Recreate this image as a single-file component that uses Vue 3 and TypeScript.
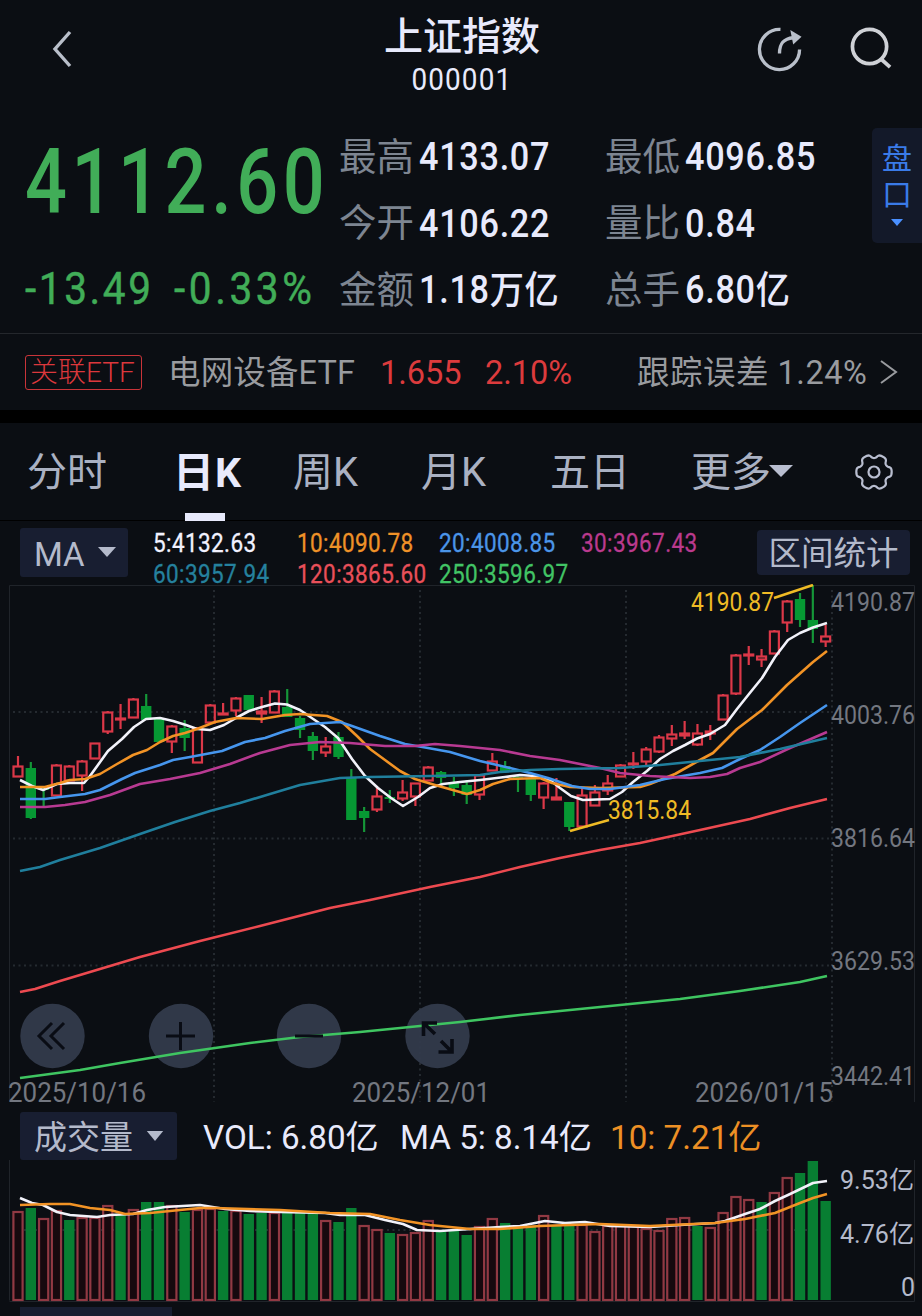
<script setup lang="ts">
type Candle = [kind: 'r' | 'g', top: number, bottom: number, high: number, low: number]

interface Stat {
  label: string
  value: string
}

const stats: Stat[] = [
  { label: '最高', value: '4133.07' },
  { label: '最低', value: '4096.85' },
  { label: '今开', value: '4106.22' },
  { label: '量比', value: '0.84' },
  { label: '金额', value: '1.18万亿' },
  { label: '总手', value: '6.80亿' },
]

const tabs = ['分时', '日K', '周K', '月K', '五日']

const averages = [
  { text: '5:4132.63', tone: 'white' },
  { text: '10:4090.78', tone: 'orange' },
  { text: '20:4008.85', tone: 'blue' },
  { text: '30:3967.43', tone: 'magenta' },
  { text: '60:3957.94', tone: 'teal' },
  { text: '120:3865.60', tone: 'red' },
  { text: '250:3596.97', tone: 'green' },
]

const step = 12.82
const cx = (i: number): number => 18 + step * i

// Six-lobed outline of the settings gear
const gearPoints = Array.from({ length: 120 }, (_, i) => {
  const a = (i / 120) * Math.PI * 2
  const r = 15.6 + 2.1 * Math.tanh(1.8 * Math.cos(6 * a) + 0.7)
  return `${(19 + r * Math.cos(a)).toFixed(2)},${(18 + r * Math.sin(a)).toFixed(2)}`
}).join(' ')

const candles: Candle[] = [
  ['r', 766, 777, 756, 777], ['g', 768, 818, 762, 819], ['g', 788, 790, 787, 808], ['r', 765, 796, 764, 796],
  ['r', 766, 781, 765, 781], ['r', 761, 776, 760, 791], ['r', 743, 759, 743, 759], ['r', 712, 732, 711, 734],
  ['r', 718, 720, 704, 729], ['r', 699, 718, 698, 718], ['g', 706, 720, 694, 720], ['g', 719, 742, 719, 742],
  ['r', 726, 742, 725, 753], ['g', 728, 738, 720, 751], ['r', 728, 763, 727, 763], ['r', 705, 723, 704, 723],
  ['r', 713, 715, 703, 715], ['r', 698, 711, 697, 716], ['g', 695, 710, 695, 711], ['r', 711, 714, 697, 723],
  ['r', 691, 713, 690, 713], ['g', 707, 717, 689, 717], ['g', 718, 730, 716, 738], ['g', 736, 751, 732, 760],
  ['r', 746, 753, 737, 757], ['g', 737, 757, 732, 759], ['g', 778, 820, 769, 820], ['g', 811, 818, 807, 832],
  ['r', 796, 810, 787, 812], ['g', 797, 799, 790, 803], ['r', 792, 799, 780, 801], ['r', 783, 797, 783, 806],
  ['r', 767, 781, 766, 781], ['g', 772, 778, 771, 784], ['g', 782, 788, 777, 796], ['g', 785, 795, 780, 804],
  ['r', 775, 795, 775, 800], ['r', 761, 771, 753, 771], ['g', 766, 772, 761, 773], ['g', 777, 779, 775, 792],
  ['g', 779, 795, 779, 801], ['r', 783, 798, 782, 809], ['r', 797, 800, 778, 800], ['g', 802, 827, 802, 831],
  ['r', 795, 827, 787, 827], ['r', 792, 806, 785, 806], ['r', 783, 791, 775, 795], ['r', 765, 777, 764, 777],
  ['r', 763, 765, 752, 769], ['r', 749, 762, 747, 765], ['r', 737, 752, 735, 753], ['r', 734, 739, 725, 746],
  ['r', 733, 736, 721, 739], ['r', 733, 745, 724, 746], ['r', 731, 734, 725, 740], ['r', 695, 720, 694, 720],
  ['r', 655, 694, 654, 695], ['r', 654, 656, 646, 665], ['r', 656, 660, 649, 667], ['r', 631, 654, 630, 654],
  ['r', 601, 623, 600, 632], ['g', 599, 620, 593, 627], ['g', 620, 629, 585, 643], ['r', 636, 642, 625, 647],
]

const volumeKinds = 'rgrrgrrrgrggrgrrgrggrgggrggrrgrrrggg' + 'rrgggrggrrrrrrrrrgrrrrgrrggg'
const volumeTops = [
  1211, 1208, 1218, 1210, 1220, 1217, 1217, 1205, 1214, 1209, 1202, 1202, 1205, 1212, 1209, 1208,
  1211, 1210, 1214, 1213, 1212, 1212, 1212, 1213, 1220, 1222, 1208, 1225, 1229, 1233, 1234, 1232,
  1220, 1232, 1231, 1235, 1226, 1218, 1223, 1226, 1226, 1215, 1226, 1225, 1224, 1231, 1225, 1225,
  1225, 1228, 1230, 1218, 1217, 1226, 1227, 1212, 1196, 1199, 1202, 1192, 1177, 1173, 1161, 1201,
]
const volumes = volumeTops.map((top, i) => ({ x: cx(i), top, red: volumeKinds[i] === 'r' }))

const priceLines = [
  { tone: 'green', points: '20,1078 50,1074 80,1070 120,1063 180,1053 250,1043 300,1037 360,1032 410,1027 460,1022 520,1015 600,1007 680,999 740,991 800,982 827,976' },
  { tone: 'red', points: '20,992 35,989 60,981 100,969 140,957 200,941 260,926 330,908 370,900 430,887 480,877 520,867 560,858 600,850 640,843 700,830 750,819 790,808 827,799' },
  { tone: 'white', points: '20,780 32,786 43,790 57,784 70,783 84,783 90,776 108,751 122,739 134,727 146,719 160,718 173,721 186,725 197,729 210,730 224,725 236,718 249,711 262,707 275,703.5 287,704.5 300,710 325,727 338,738 352,759 365,776 378,788 391,798 403,806 418,797 430,788 443,784 460,782 480,780 505,777 520,775 535,776 550,780 560,788 571,796 583,800 610,799 622,792 633,782 647,771 660,759 673,751 685,745 697,738.5 710,734 725,725 737,709 749,694 762,678 775,657 788,640 800,633 813,627.5 827,623' },
  { tone: 'orange', points: '20,787 45,787 60,783 70,780 85,779 100,774 117,764 133,755 147,750 160,742 173,736 185,733 197,729 215,722 236,718 262,719 285,715 300,714 327,716 342,722 357,736 370,749 385,760 400,771 415,779 435,785 467,794 480,790 493,784 510,779 540,778 552,783 570,787 600,788 640,787 650,784 675,774 700,760 713,753 737,729 762,710 787,685 813,662 827,651' },
  { tone: 'blue', points: '20,799 45,799 60,797 85,794 100,790 122,779 135,773 160,765 173,760 190,757 222,751 245,742 265,738 285,731 310,724 340,722 352,726 380,736 405,744 428,748 450,752 480,761 510,768 530,773 548,778 572,786 590,789 610,789 640,785 665,779 700,773 722,768 740,759 760,750 780,737 800,723 827,705' },
  { tone: 'magenta', points: '20,807 45,807 65,805 85,802 110,795 140,784 170,779 200,773 230,764 260,753 290,745 320,742 350,743 385,746 415,746 435,744 460,746 500,750 530,756 560,760 600,768 620,773 650,776 690,778 710,777 727,774 740,768 760,762 790,748 827,732' },
  { tone: 'teal', points: '20,871 40,867 60,860 100,848 140,834 175,822 210,811 240,803 270,794 300,785 340,778 370,777 430,776 480,775 500,772 530,770 560,769 620,768 660,765 700,761 740,757 780,749 827,738' },
]

const volumeLines = [
  { tone: 'white', points: '20,1198 32,1203 43,1205 57,1212 70,1215 97,1217 110,1215 133,1214 147,1210 165,1207 200,1205 225,1209 250,1211 280,1212 325,1213 340,1215 365,1215 385,1220 403,1224 417,1230 440,1231 470,1229 500,1227 520,1226 545,1221 565,1223 585,1222 610,1226 650,1227 680,1225 715,1223 725,1221 745,1214 760,1209 775,1201 788,1195 813,1183 827,1181' },
  { tone: 'orange', points: '20,1205 50,1204 70,1204 90,1208 110,1210 125,1214 150,1213 180,1210 200,1208 215,1208 280,1210 330,1213 370,1214 400,1220 430,1225 470,1229 500,1229 540,1226 600,1224 650,1226 715,1223 745,1219 775,1213 800,1203 813,1198 827,1194' },
]

const priceAxis = [
  { text: '4190.87', y: 611 },
  { text: '4003.76', y: 723.5 },
  { text: '3816.64', y: 847 },
  { text: '3629.53', y: 969.5 },
  { text: '3442.41', y: 1085 },
]

const dates = [
  { text: '2025/10/16', x: 8 },
  { text: '2025/12/01', x: 352 },
  { text: '2026/01/15', x: 695 },
]
</script>

<template>
  <main class="screen">
    <header class="top">
      <svg class="back" viewBox="0 0 24 40"><path d="M20 3 5 20l15 17" /></svg>
      <div class="title">
        <h1>上证指数</h1>
        <span>000001</span>
      </div>
      <svg class="share" viewBox="0 0 48 48">
        <path d="M25 3.500A20.500 20.500 0 1 0 44.500 24" />
        <path d="M24 28c0-10 4-15 14-16" />
        <path class="solid" d="M35 4 46.500 11 38 19z" />
      </svg>
      <svg class="search" viewBox="0 0 44 44"><circle cx="20" cy="20" r="17.500" /><path d="m32 33 9 8" /></svg>
    </header>

    <section class="quote">
      <div class="last">
        <strong>4112.60</strong>
        <div class="delta"><span>-13.49</span><span class="pct">-0.33%</span></div>
      </div>
      <dl class="stats">
        <div v-for="s in stats" :key="s.label"><dt>{{ s.label }}</dt><dd>{{ s.value }}</dd></div>
      </dl>
      <aside class="depth">
        <span>盘</span><span>口</span>
        <svg viewBox="0 0 12 8"><path d="M0 0h12L6 7z" /></svg>
      </aside>
    </section>

    <section class="etf">
      <span class="tag">关联ETF</span>
      <span class="name">电网设备ETF</span>
      <span class="up price">1.655</span>
      <span class="up rate">2.10%</span>
      <span class="track">跟踪误差 1.24%</span>
      <svg viewBox="0 0 20 28"><path d="m2 3 15 11L2 25" /></svg>
    </section>

    <nav class="tabs">
      <span v-for="t in tabs" :key="t" :class="{ active: t === '日K' }">{{ t }}</span>
      <span class="more">更多<svg viewBox="0 0 24 12"><path d="M0 0h24L12 12z" /></svg></span>
      <svg class="gear" viewBox="0 0 38 36">
        <polygon :points="gearPoints" />
        <circle cx="19" cy="18" r="5.500" />
      </svg>
    </nav>

    <section class="legend">
      <div class="picker">MA<svg viewBox="0 0 18 10"><path d="M0 0h18L9 10z" /></svg></div>
      <div class="ma-grid">
        <span v-for="a in averages" :key="a.text" :class="a.tone">{{ a.text }}</span>
      </div>
      <div class="range">区间统计</div>
    </section>

    <svg class="chart" viewBox="0 584 922 524">
      <path class="frame" d="M9.500 1102V585.500H914.500V1102" />
      <path class="grid" d="M13 712H832M13 838.500H832M13 965.500H832M214 590V1102M420 590V1102M626 590V1102M832 590V1102" />
      <g v-for="(c, i) in candles" :key="i" :class="c[0] === 'r' ? 'rise' : 'fall'">
        <template v-if="c[0] === 'r'">
          <path :d="`M${cx(i)} ${c[3]}V${c[1]}M${cx(i)} ${c[2]}V${c[4]}`" />
          <rect :x="cx(i) - 4.5" :y="c[1] + 0.5" width="9" :height="Math.max(1, c[2] - c[1] - 1)" />
        </template>
        <template v-else>
          <path :d="`M${cx(i)} ${c[3]}V${c[4]}`" />
          <rect :x="cx(i) - 5.2" :y="c[1]" width="10.4" :height="c[2] - c[1]" />
        </template>
      </g>
      <g class="rounds">
        <circle v-for="x in [52.5, 181, 309, 437.5]" :key="x" :cx="x" cy="1036" r="32.200" />
      </g>
      <polyline v-for="l in priceLines" :key="l.tone" class="line" :class="l.tone" :points="l.points" />
      <path class="glyph" d="m52 1023-13 13 13 13M64 1023l-13 13 13 13M166 1036h29M180.500 1022v28M295 1036h28" />
      <path class="glyph arrows" d="M437 1023H423.500V1036M424 1023.500 435 1034M452 1039V1052H438.500M451.500 1051.500 441 1041" />
      <path class="callout" d="M774 598 813 585M570 831 609 820" />
      <text class="note" x="691" y="611" textLength="83" lengthAdjust="spacingAndGlyphs">4190.87</text>
      <text class="note" x="608" y="819" textLength="83" lengthAdjust="spacingAndGlyphs">3815.84</text>
      <text v-for="p in priceAxis" :key="p.text" class="axis" x="831" :y="p.y" textLength="84" lengthAdjust="spacingAndGlyphs">{{ p.text }}</text>
      <text v-for="d in dates" :key="d.text" class="axis date" :x="d.x" y="1101.500" textLength="138" lengthAdjust="spacingAndGlyphs">{{ d.text }}</text>
    </svg>

    <section class="vol-head">
      <div class="picker wide">成交量<svg viewBox="0 0 18 11"><path d="M0 0h18L9 11z" /></svg></div>
      <span class="v1">VOL: 6.80亿</span>
      <span class="v2">MA 5: 8.14亿</span>
      <span class="v3">10: 7.21亿</span>
    </section>

    <svg class="volume" viewBox="0 1160 922 147">
      <path class="frame" d="M9.500 1160V1300.500M9.500 1301.500H914.500V1160" />
      <path class="grid" d="M13 1230H832" />
      <template v-for="(v, i) in volumes" :key="i">
        <rect v-if="v.red" class="vol-r" :x="v.x - 4.6" :y="v.top + 1" width="9.2" :height="1299 - v.top" />
        <rect v-else class="vol-g" :x="v.x - 5.2" :y="v.top" width="10.4" :height="1300 - v.top" />
      </template>
      <polyline v-for="l in volumeLines" :key="l.tone" class="line" :class="l.tone" :points="l.points" />
      <text class="vaxis" x="840" y="1189" textLength="74" lengthAdjust="spacingAndGlyphs">9.53亿</text>
      <text class="vaxis" x="840" y="1243" textLength="74" lengthAdjust="spacingAndGlyphs">4.76亿</text>
      <text class="vaxis" x="901" y="1296">0</text>
    </svg>
    <div class="next"></div>
  </main>
</template>

<style>
body {
  background: #0b0e13;
}
</style>

<style scoped>
.screen {
  width: 922px;
  height: 1316px;
  overflow: hidden;
  background: #0b0e13;
  color: #e8eafc;
  font-family: Roboto, "Noto Sans CJK SC", sans-serif;
  line-height: 1;
  white-space: nowrap;
}
svg {
  display: block;
  flex: none;
}
.top {
  display: grid;
  grid-template-columns: 50px 335px 154px 217px 94px 72px;
  height: 120px;
}
.back {
  grid-column: 2;
  width: 24px;
  height: 40px;
  margin-top: 29px;
}
.top path,
.top circle {
  fill: none;
  stroke: #b9bfca;
  stroke-width: 3.4;
}
.top .search * {
  stroke: #cfd1d6;
  stroke-width: 3.8;
}
.top .solid {
  fill: #b9bfca;
  stroke: none;
}
.title {
  display: flex;
  flex-direction: column;
  align-items: center;
}
.title h1 {
  margin: 18px 0 0;
  font-size: 39px;
  font-weight: 500;
}
.title span {
  margin-top: 7px;
  font-size: 31px;
  letter-spacing: 1.2px;
  transform: scaleX(0.9);
}
.share {
  grid-column: 5;
  width: 47px;
  height: 47px;
  margin-top: 26px;
}
.search {
  grid-column: 6;
  width: 43px;
  height: 43px;
  margin-top: 27px;
}
.quote {
  display: flex;
  height: 213px;
  border-bottom: 1px solid #24272c;
}
.last {
  width: 315px;
  padding-left: 25px;
  color: #41ad58;
}
.last strong {
  display: block;
  height: 90px;
  margin-top: 18px;
  font-size: 90px;
  font-weight: 500;
  line-height: 90px;
  letter-spacing: 5.6px;
  transform: scaleX(0.82);
  transform-origin: left;
}
.delta {
  display: flex;
  margin-top: 38px;
  font-size: 45px;
}
.delta span {
  flex: none;
  width: 149px;
  letter-spacing: 2.9px;
  transform: scaleX(0.9);
  transform-origin: left;
  -webkit-text-stroke: 0.5px currentColor;
}
.delta .pct {
  letter-spacing: 4px;
}
.stats {
  display: grid;
  grid-template-columns: 266px 266px;
  grid-template-rows: repeat(3, 66.5px);
  margin: 4px 0 0 -1px;
}
.stats div {
  display: flex;
  align-items: center;
}
.stats dt {
  width: 80px;
  color: #7d8591;
  font-size: 37.500px;
}
.stats dd {
  margin: 0;
  font-size: 38px;
  font-weight: 500;
  letter-spacing: 0.8px;
  transform: scaleX(0.9);
  transform-origin: left;
}
.depth {
  display: flex;
  flex-direction: column;
  align-items: center;
  box-sizing: border-box;
  width: 50px;
  height: 115px;
  margin: 8px 0 0 1px;
  padding-top: 16px;
  border-radius: 5px 0 0 5px;
  background: #131929;
  color: #3a7be8;
  font-size: 30px;
}
.depth span + span {
  margin-top: 6px;
}
.depth svg {
  width: 12px;
  height: 8px;
  margin-top: 9px;
  fill: #4a90ff;
}
.etf {
  display: flex;
  align-items: center;
  height: 76px;
  border-bottom: 13px solid #000;
  color: #999b9f;
  font-size: 32.5px;
}
.etf .name,
.etf .up,
.etf .track {
  padding-top: 2px;
}
.tag {
  box-sizing: border-box;
  width: 117px;
  height: 35px;
  margin-left: 25px;
  padding-left: 4px;
  border: 1.5px solid #c93439;
  border-radius: 3px;
  color: #dc383c;
  font-size: 28px;
  font-weight: 300;
  line-height: 34px;
}
.name {
  width: 212px;
  margin-left: 26px;
  letter-spacing: 0.15px;
}
.up {
  color: #dc3b3d;
}
.price {
  width: 105px;
}
.rate {
  width: 152px;
}
.track {
  width: 242px;
  letter-spacing: 0.5px;
}
.etf svg {
  width: 20px;
  height: 28px;
  fill: none;
  stroke: #999b9f;
  stroke-width: 2;
}
.tabs {
  display: grid;
  grid-template-columns: 149px 117px 128px 129px 142px 163px 40px;
  align-items: center;
  box-sizing: border-box;
  height: 98px;
  padding: 3px 0 0 27px;
  border-bottom: 1px solid #000;
  color: #aab1c2;
  font-size: 40px;
}
.active {
  position: relative;
  color: #e8eafc;
  font-size: 41px;
  font-weight: 700;
}
.active {
  margin-left: -3px;
  letter-spacing: 1px;
}
.active::after {
  content: "";
  position: absolute;
  left: 12px;
  top: 60px;
  width: 40px;
  height: 8px;
  background: #e8eafc;
}
.more {
  display: flex;
  align-items: center;
  margin-left: -1px;
}
.more svg {
  width: 24px;
  height: 12px;
  margin: -5px 0 0 -2px;
  fill: #b9bed0;
}
.gear {
  width: 38px;
  height: 36px;
  margin-top: -3px;
  fill: none;
  stroke: #b9bed0;
  stroke-width: 2.2;
}
.legend {
  display: flex;
  height: 63px;
}
.picker {
  display: flex;
  align-items: center;
  box-sizing: border-box;
  width: 108px;
  height: 49px;
  margin: 7px 0 0 20px;
  padding: 3px 0 0 14px;
  border-radius: 3px;
  background: #181e31;
  color: #b4bacb;
  font-size: 33px;
}
.picker svg {
  width: 18px;
  height: 10px;
  margin: -5px 0 0 13px;
  fill: #b4bacb;
}
.ma-grid {
  display: grid;
  grid-template-columns: 144px 142px 142px 175px;
  grid-template-rows: 31px 31px;
  align-items: center;
  height: 62px;
  margin-left: 25px;
  padding-top: 7px;
  font-size: 25px;
  letter-spacing: 0.45px;
}
.ma-grid span {
  stroke: none;
  transform: scaleX(0.9);
  transform-origin: left;
  -webkit-text-stroke: 0.3px currentColor;
}
.range {
  box-sizing: border-box;
  width: 153px;
  height: 45px;
  margin: 9px 0 0 1px;
  border-radius: 4px;
  background: #181e31;
  color: #b4bacb;
  font-size: 32.5px;
  line-height: 49px;
  text-align: center;
}
.white { color: #f2f2ff; stroke: #f2f2fa; }
.orange { color: #ef9228; stroke: #f29325; }
.blue { color: #4b95e8; stroke: #4696ee; }
.magenta { color: #bb3a8e; stroke: #b83a92; }
.teal { color: #25819e; stroke: #207f9d; }
.red { color: #e9505a; stroke: #ed4a50; }
.green { color: #42c465; stroke: #3fc561; }
.chart {
  width: 922px;
  height: 524px;
}
.frame {
  fill: none;
  stroke: #20242a;
  stroke-width: 1;
}
.grid {
  stroke: #252a30;
  stroke-width: 2;
  stroke-dasharray: 2 3.5;
}
.line {
  fill: none;
  stroke-width: 2.6;
  stroke-linejoin: round;
}
.rise path,
.rise rect {
  fill: none;
  stroke: #db3848;
  stroke-width: 2.2;
}
.fall path {
  stroke: #159638;
  stroke-width: 2.2;
}
.fall rect {
  fill: #069833;
}
.rounds {
  fill: #323a4b;
  fill-opacity: 0.96;
}
.glyph {
  fill: none;
  stroke: #090c14;
  stroke-width: 3;
}
.arrows {
  stroke-width: 3.6;
}
.callout {
  stroke: #efbb25;
  stroke-width: 2.6;
}
.note {
  fill: #efbb25;
  font-size: 25px;
}
.axis {
  fill: #737780;
  font-size: 25px;
}
.axis.date {
  font-size: 28.500px;
}
.vol-head {
  display: flex;
  height: 52px;
}
.picker.wide {
  width: 157px;
  height: 48px;
  margin-top: 4px;
  font-size: 33px;
}
.picker.wide svg {
  margin-top: -4px;
}
.vol-head span {
  padding-top: 13px;
  font-size: 33.200px;
}
.v1 {
  width: 197px;
  margin-left: 26px;
}
.v2 {
  width: 210px;
}
.v3 {
  color: #ed9025;
}
.volume {
  width: 922px;
  height: 147px;
}
.vol-r {
  fill: #16090e;
  stroke: #913943;
  stroke-width: 2.2;
}
.vol-g {
  fill: #087e32;
}
.vaxis {
  fill: #b4bacb;
  font-size: 25px;
}
.next {
  width: 152px;
  height: 9px;
  margin-left: 20px;
  background: #181e31;
}
</style>
